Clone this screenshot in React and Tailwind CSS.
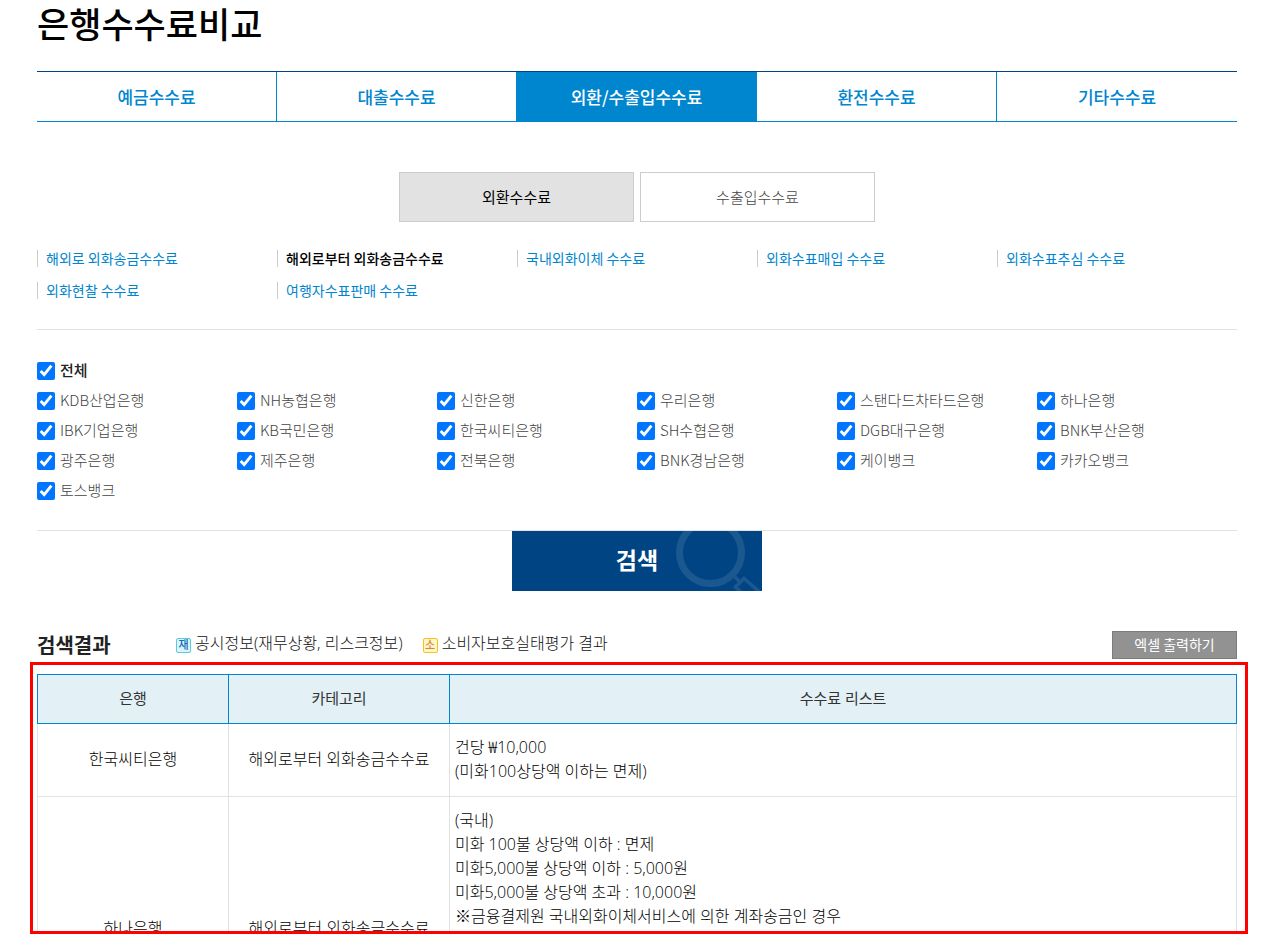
import { useState } from 'react'

const tabs = ['예금수수료', '대출수수료', '외환/수출입수수료', '환전수수료', '기타수수료']

const feeLinks = [
  '해외로 외화송금수수료',
  '해외로부터 외화송금수수료',
  '국내외화이체 수수료',
  '외화수표매입 수수료',
  '외화수표추심 수수료',
  '외화현찰 수수료',
  '여행자수표판매 수수료',
]

const banks = [
  'KDB산업은행', 'NH농협은행', '신한은행', '우리은행', '스탠다드차타드은행', '하나은행',
  'IBK기업은행', 'KB국민은행', '한국씨티은행', 'SH수협은행', 'DGB대구은행', 'BNK부산은행',
  '광주은행', '제주은행', '전북은행', 'BNK경남은행', '케이뱅크', '카카오뱅크',
  '토스뱅크',
]

const results = [
  {
    bank: '한국씨티은행',
    category: '해외로부터 외화송금수수료',
    fees: ['건당 ₩10,000', '(미화100상당액 이하는 면제)'],
    rowClass: 'h-[73px]',
  },
  {
    bank: '하나은행',
    category: '해외로부터 외화송금수수료',
    fees: [
      '(국내)',
      '미화 100불 상당액 이하 : 면제',
      '미화5,000불 상당액 이하 : 5,000원',
      '미화5,000불 상당액 초과 : 10,000원',
      '※금융결제원 국내외화이체서비스에 의한 계좌송금인 경우',
    ],
    rowClass: 'h-[265px]',
  },
]

const App = () => {
  const [tab, setTab] = useState('외환/수출입수수료')
  const [kind, setKind] = useState('외환수수료')
  const [fee, setFee] = useState('해외로부터 외화송금수수료')
  const [checked, setChecked] = useState(banks)

  const allChecked = checked.length === banks.length

  const toggleBank = (bank) => {
    setChecked(checked.includes(bank) ? checked.filter((b) => b !== bank) : [...checked, bank])
  }

  return (
    <div className="h-screen flex flex-col overflow-hidden bg-white pl-[37px] pr-[43px] font-['Noto_Sans_CJK_KR',sans-serif] text-black">
      <h1 className="h-[71px] shrink-0 text-[35px] leading-[46px] font-medium">은행수수료비교</h1>

      {/* Main tabs */}
      <nav className="grid grid-cols-5 shrink-0 h-[51px] border-t border-b border-t-[#004483] border-b-[#0085cf]">
        {tabs.map((name, i) => (
          <button
            key={name}
            onClick={() => setTab(name)}
            className={`text-[17px] font-medium ${i < tabs.length - 1 ? 'border-r border-[#0085cf]' : ''} ${
              tab === name ? 'bg-[#0085cf] text-white' : 'text-[#0085cf]'
            }`}
          >
            {name}
          </button>
        ))}
      </nav>

      {/* Sub tabs */}
      <div className="flex justify-center shrink-0 gap-1.5 mt-[50px]">
        {['외환수수료', '수출입수수료'].map((name) => (
          <button
            key={name}
            onClick={() => setKind(name)}
            className={`w-[235px] h-[50px] border border-[#ccc] text-[15px] ${
              kind === name ? 'bg-[#e2e2e2] text-black' : 'bg-white font-light text-[#444]'
            }`}
          >
            {name}
          </button>
        ))}
      </div>

      {/* Fee links */}
      <ul className="grid grid-cols-5 shrink-0 gap-y-[15px] mt-7 pb-[30px] border-b border-[#e2e2e2]">
        {feeLinks.map((name) => (
          <li key={name} className="border-l border-[#ccc] pl-2 h-[17px] flex items-center">
            <a
              href="#fee"
              onClick={() => setFee(name)}
              className={`text-[14px] ${fee === name ? 'font-medium text-black' : 'text-[#0085cf]'}`}
            >
              {name}
            </a>
          </li>
        ))}
      </ul>

      {/* Banks */}
      <div className="shrink-0 pt-[26px] pb-[24px] border-b border-[#e2e2e2] text-[15px]">
        <label className="flex items-center gap-[5px] h-[30px] text-[#222]">
          <input
            type="checkbox"
            checked={allChecked}
            onChange={() => setChecked(allChecked ? [] : banks)}
            className="size-[18px]"
          />
          <span className="pb-0.5 font-medium">전체</span>
        </label>
        <div className="grid grid-cols-6">
          {banks.map((bank) => (
            <label key={bank} className="flex items-center gap-[5px] h-[30px] font-light text-[#444]">
              <input
                type="checkbox"
                checked={checked.includes(bank)}
                onChange={() => toggleBank(bank)}
                className="size-[18px]"
              />
              <span className="pb-0.5">{bank}</span>
            </label>
          ))}
        </div>
      </div>

      {/* Search */}
      <button className="relative self-center shrink-0 w-[250px] h-[60px] pb-[3px] overflow-hidden bg-[#004483] text-white text-[23px] font-bold">
        검색
        <svg className="absolute inset-0" width="250" height="60" viewBox="0 0 250 60" fill="none" stroke="#1c5890">
          <circle cx="198.5" cy="21.5" r="31" strokeWidth="7" />
          <path d="M221 44 L228 51 M250 63 L232 47.5 L223.5 56 L231 63" strokeWidth="3.6" />
        </svg>
      </button>

      {/* Result heading */}
      <div className="flex items-center shrink-0 h-7 mt-10">
        <h2 className="w-[139px] text-[20px] font-bold text-[#222]">검색결과</h2>
        <p className="flex items-center gap-1 text-[16px] font-light text-[#111] font-['Open_Sans','Noto_Sans_CJK_KR',sans-serif]">
          <span className="size-[15px] flex items-center justify-center rounded-xs border border-[#5bc8dc] bg-[#d8f6fb] text-[11px] font-medium text-[#1668b8]">재</span>
          <span className="pb-1">공시정보(재무상황, 리스크정보)</span>
          <span className="size-[15px] ml-4 flex items-center justify-center rounded-xs border border-[#f6c21c] bg-[#fff6c8] text-[11px] font-medium text-[#dd8040]">소</span>
          <span className="pb-1">소비자보호실태평가 결과</span>
        </p>
        <button className="ml-auto w-[125px] h-7 pb-0.5 border border-[#7c7c7c] bg-[#929292] text-[14px] text-white">
          엑셀 출력하기
        </button>
      </div>

      {/* Results */}
      <div className="flex-1 min-h-0 overflow-hidden mt-[3px] -ml-[7px] -mr-[11px] border-3 border-[#f00] pt-[9px] pl-1 pr-2">
        <table className="w-full table-fixed border-collapse text-[16px] text-black font-['Open_Sans','Noto_Sans_CJK_KR',sans-serif]">
          <colgroup>
            <col className="w-[191px]" />
            <col className="w-[221px]" />
            <col />
          </colgroup>
          <thead>
            <tr className="h-[49px] bg-[#e3f0f6] text-[15px] text-[#333]">
              <th className="border border-[#0085cf] pb-0.5 font-normal">은행</th>
              <th className="border border-[#0085cf] pb-0.5 font-normal">카테고리</th>
              <th className="border border-[#0085cf] pb-0.5 font-normal">수수료 리스트</th>
            </tr>
          </thead>
          <tbody className="font-light">
            {results.map((row) => (
              <tr key={row.bank} className={row.rowClass}>
                <td className="border border-[#e2e2e2] text-center pb-0.5">{row.bank}</td>
                <td className="border border-[#e2e2e2] text-center pb-0.5">{row.category}</td>
                <td className="border border-[#e2e2e2] align-top px-[5px] py-[11px] leading-6">
                  {row.fees.map((line) => (
                    <p key={line}>{line}</p>
                  ))}
                </td>
              </tr>
            ))}
          </tbody>
        </table>
      </div>
    </div>
  )
}

export default App
